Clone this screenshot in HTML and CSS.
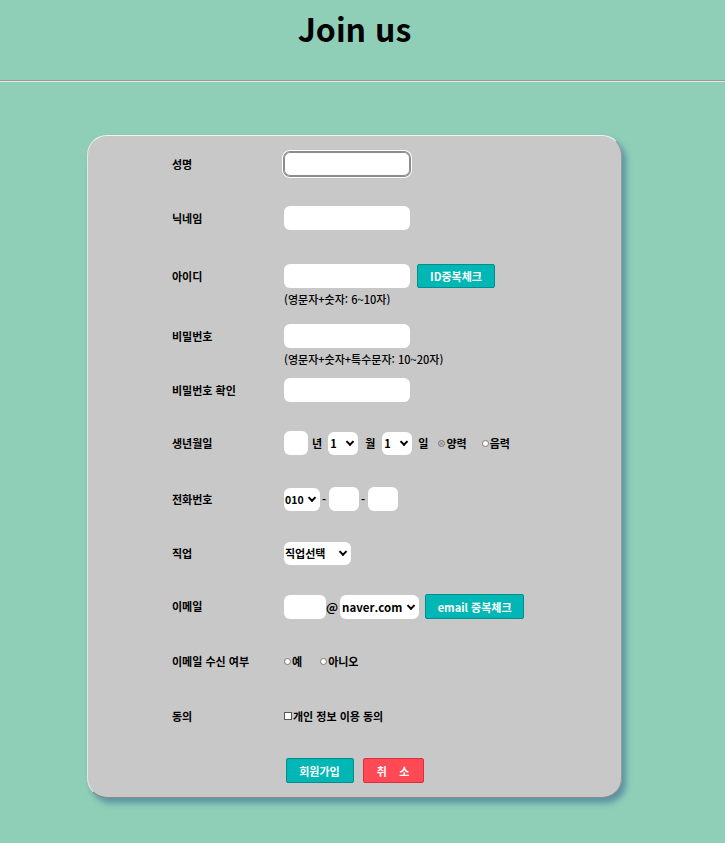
FILE: index.html
```html
<!DOCTYPE html>
<html lang="ko">
<head>
<meta charset="utf-8">
<title>Join us</title>
<link rel="stylesheet" href="styles.css">
</head>
<body>
<header class="header">
  <h1 class="title">Join us</h1>
</header>
<hr class="rule">
<form class="card">
  <div class="row h54">
    <div class="label">성명</div>
    <div class="field"><input class="box w126 focused" type="text"></div>
  </div>
  <div class="row h58">
    <div class="label">닉네임</div>
    <div class="field"><input class="box w126" type="text"></div>
  </div>
  <div class="row h60">
    <div class="label">아이디</div>
    <div class="field col">
      <div class="line">
        <input class="box w126" type="text">
        <button type="button" class="btn teal id-btn">ID중복체크</button>
      </div>
      <div class="note">(영문자+숫자: 6~10자)</div>
    </div>
  </div>
  <div class="row h54">
    <div class="label">비밀번호</div>
    <div class="field col">
      <input class="box w126" type="password">
      <div class="note">(영문자+숫자+특수문자: 10~20자)</div>
    </div>
  </div>
  <div class="row h53">
    <div class="label">비밀번호 확인</div>
    <div class="field"><input class="box w126" type="password"></div>
  </div>
  <div class="row h56">
    <div class="label">생년월일</div>
    <div class="field birth">
      <input class="box w24" type="text">
      <span class="txt t-year">년</span>
      <span class="selwrap"><select class="sel w30"><option>1</option></select></span>
      <span class="txt t-month">월</span>
      <span class="selwrap"><select class="sel w30"><option>1</option></select></span>
      <span class="txt t-day">일</span>
      <label class="opt"><input class="radio" type="radio" name="cal" checked>양력</label>
      <label class="opt lunar"><input class="radio" type="radio" name="cal">음력</label>
    </div>
  </div>
  <div class="row h54">
    <div class="label">전화번호</div>
    <div class="field phone">
      <span class="selwrap"><select class="sel w36"><option>010</option></select></span>
      <span class="txt">-</span>
      <input class="box w30" type="text">
      <span class="txt">-</span>
      <input class="box w30" type="text">
    </div>
  </div>
  <div class="row h53">
    <div class="label">직업</div>
    <div class="field"><span class="selwrap"><select class="sel w67"><option>직업선택</option></select></span></div>
  </div>
  <div class="row h55">
    <div class="label">이메일</div>
    <div class="field email">
      <input class="box w42" type="text">
      <span class="txt at">@</span>
      <span class="selwrap"><select class="sel w79 big"><option>naver.com</option></select></span>
      <button type="button" class="btn teal mail-btn">email 중복체크</button>
    </div>
  </div>
  <div class="row h55">
    <div class="label">이메일 수신 여부</div>
    <div class="field">
      <label class="opt"><input class="radio" type="radio" name="rcv">예</label>
      <label class="opt no"><input class="radio" type="radio" name="rcv">아니오</label>
    </div>
  </div>
  <div class="row h54">
    <div class="label">동의</div>
    <div class="field">
      <label class="opt"><input class="check" type="checkbox">개인 정보 이용 동의</label>
    </div>
  </div>
  <div class="actions">
    <button type="submit" class="btn teal join">회원가입</button>
    <button type="reset" class="btn red cancel">취&nbsp;&nbsp;&nbsp;&nbsp;소</button>
  </div>
</form>
</body>
</html>
```

FILE: styles.css
```css
* { box-sizing: border-box; }

html, body {
  margin: 0;
  padding: 0;
  background: #8fcfb8;
  font-family: "Noto Sans CJK KR", "Noto Sans", sans-serif;
  color: #000;
}

body { height: 843px; overflow: hidden; }

.header {
  height: 80px;
  text-align: center;
}

.title {
  margin: 0;
  padding-top: 2px;
  font-size: 32px;
  font-weight: 700;
  line-height: 52px;
  transform: translateX(-8px);
}

.rule {
  margin: 0;
  border: 0;
  border-top: 1px solid #9a9a9a;
  border-bottom: 1px solid #e4e4e4;
  height: 0;
}

.card {
  margin: 53px 0 0 87px;
  width: 535px;
  height: 663px;
  background: #c8c8c8;
  border-radius: 20px;
  border-top: 1px solid #f2f2f2;
  border-left: 1px solid #e6e6e6;
  border-right: 1px solid #9a9a9a;
  border-bottom: 1px solid #8a8a8a;
  box-shadow: 4px 5px 6px #5a92a2;
  padding: 16px 0 0 84px;
}

.row {
  display: grid;
  grid-template-columns: 112px auto;
  align-items: start;
}
.h53 { height: 53px; }
.h54 { height: 54px; }
.h55 { height: 55px; }
.h56 { height: 56px; }
.h58 { height: 58px; }
.h60 { height: 60px; }

.label {
  font-size: 11px;
  font-weight: 700;
  line-height: 24px;
}

.field {
  display: flex;
  align-items: center;
  min-height: 24px;
  font-size: 11px;
  font-weight: 700;
}
.field.col {
  flex-direction: column;
  align-items: flex-start;
}
.line { display: flex; align-items: center; }

.note {
  font-size: 11px;
  font-weight: 500;
  line-height: 16px;
  margin-top: 3px;
}

.box {
  height: 24px;
  border: 0;
  border-radius: 6px;
  background: #fff;
  padding: 0 4px;
  margin: 0;
  font: inherit;
  outline: none;
}
.focused {
  box-shadow: inset 0 0 0 1px #8c8c8c, 0 0 0 1px #8c8c8c, 0 0 0 2px #fff;
}
.w24 { width: 24px; }
.w30 { width: 30px; }
.w36 { width: 36px; }
.w42 { width: 42px; }
.w67 { width: 67px; }
.w79 { width: 79px; }
.w126 { width: 126px; }

.selwrap {
  position: relative;
  display: inline-flex;
}
.selwrap::after {
  content: "";
  position: absolute;
  right: 5px;
  top: 50%;
  width: 4px;
  height: 4px;
  border-right: 2px solid #000;
  border-bottom: 2px solid #000;
  transform: translateY(-70%) rotate(45deg);
  pointer-events: none;
}

.sel {
  -webkit-appearance: none;
  appearance: none;
  height: 23px;
  border: 0;
  border-radius: 6px;
  background-color: #fff;
  margin: 0;
  padding: 0 0 0 1px;
  font-family: "Noto Sans CJK KR", sans-serif;
  font-size: 11px;
  font-weight: 700;
  color: #000;
  outline: none;
}
.sel.w30 { padding-left: 2px; }
.sel.w36 { font-size: 10.5px; }
.sel.big { font-size: 11.5px; height: 24px; padding-left: 2px; }

.txt { font-size: 11px; font-weight: 700; }

.t-year { margin: 0 6px 0 4px; }
.t-month { margin: 0 7px 0 7px; }
.t-day { margin: 0 10px 0 6px; }

.opt {
  display: inline-flex;
  align-items: center;
  font-size: 11px;
  font-weight: 700;
  line-height: 16px;
}
.lunar { margin-left: 15px; }
.no { margin-left: 18px; }

.phone .txt { margin: 0 3px 0 2px; }
.email .at { margin: 0 2px 0 0; font-size: 12px; }

.radio {
  -webkit-appearance: none;
  appearance: none;
  width: 7px;
  height: 7px;
  margin: 0 1px 0 0;
  border-radius: 50%;
  border: 1px solid #7a7a7a;
  background: #fff;
}
.radio:checked {
  background: #9a9a9a;
  box-shadow: inset 0 0 0 1px #c8c8c8;
}
.check {
  -webkit-appearance: none;
  appearance: none;
  width: 8px;
  height: 8px;
  margin: 0 1px 0 0;
  border: 1px solid #555;
  background: #fff;
}

.btn {
  height: 25px;
  border-radius: 2px;
  font-family: "Noto Sans CJK KR", sans-serif;
  font-size: 11px;
  font-weight: 700;
  color: #fff;
  padding: 0;
  margin: 0;
  cursor: pointer;
}
.teal {
  background: #00b7b6;
  border: 1px solid #008f8d;
}
.red {
  background: #ff4a56;
  border: 1px solid #d9303e;
}
.id-btn { width: 78px; height: 24px; margin-left: 7px; }
.mail-btn { width: 99px; margin-left: 6px; }

.actions {
  display: flex;
  justify-content: center;
  gap: 9px;
  margin-left: -84px;
}
.join { width: 68px; }
.cancel { width: 61px; }
```
